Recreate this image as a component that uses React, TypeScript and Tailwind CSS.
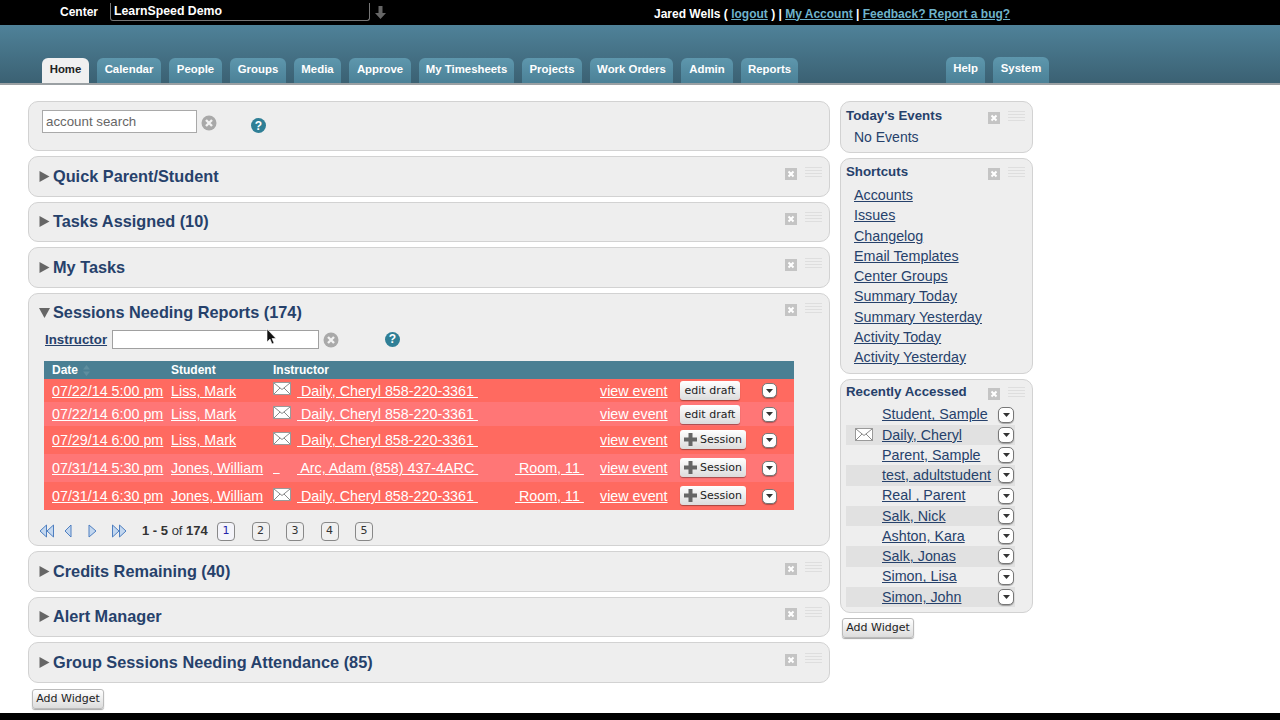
import React from "react";

const F = "font-['Liberation_Sans',Arial,sans-serif]";

function CloseBox() {
  return (
    <span className="flex h-3 w-3 items-center justify-center bg-[#c4c4c4]">
      <svg width="8" height="8" viewBox="0 0 8 8"><path d="M1.5 1.5L6.5 6.5M6.5 1.5L1.5 6.5" stroke="#fff" strokeWidth="2" /></svg>
    </span>
  );
}
function Drag() {
  return (
    <span className="flex w-[17px] flex-col gap-[2px]">
      {[0, 1, 2, 3].map((i) => (
        <span key={i} className="h-px w-full bg-[#dedede]" />
      ))}
    </span>
  );
}
function Controls({ low }: { low?: boolean }) {
  return (
    <div className={`ml-auto flex items-start gap-[8px] pr-[7px] ${low ? "mt-[4px]" : ""}`}>
      <span className="mt-[1px]"><CloseBox /></span>
      <span><Drag /></span>
    </div>
  );
}
function ClearIcon() {
  return (
    <svg width="16" height="16" viewBox="0 0 16 16" className="shrink-0">
      <circle cx="8" cy="8" r="7.5" fill="#a9a9a9" />
      <path d="M5 5L11 11M11 5L5 11" stroke="#f2f2f2" strokeWidth="2.4" />
    </svg>
  );
}
function HelpIcon() {
  return (
    <span className={`flex h-[15px] w-[15px] shrink-0 items-center justify-center rounded-full bg-[#2f7f96] text-[12px] font-bold leading-none text-white ${F}`}>?</span>
  );
}
function Envelope() {
  return (
    <svg width="18" height="13" viewBox="0 0 18 13" className="shrink-0">
      <rect x="0.5" y="0.5" width="17" height="12" fill="#fff" stroke="#9a9a9a" />
      <path d="M1 1L9 7.5L17 1M1 12L7 6M17 12L11 6" fill="none" stroke="#8a8a8a" strokeWidth="1" />
    </svg>
  );
}
function Caret({ open }: { open?: boolean }) {
  return (
    <svg width="11" height="11" viewBox="0 0 11 11" className="shrink-0">
      {open ? <path d="M0 1H11L5.5 11Z" fill="#666" /> : <path d="M0.5 0L10.5 5.5L0.5 11Z" fill="#666" />}
    </svg>
  );
}
function Drop({ size = 15 }: { size?: number }) {
  return (
    <span className="flex shrink-0 items-center justify-center rounded-[5px] border border-[#777] bg-white shadow-[0_1px_1px_rgba(0,0,0,.3)]" style={{ width: size, height: size }}>
      <svg width="7" height="4" viewBox="0 0 7 4"><path d="M0 0H7L3.5 4Z" fill="#333" /></svg>
    </span>
  );
}
function Panel({ title }: { title: string }) {
  return (
    <section className="flex h-[40.5px] items-start rounded-[10px] border border-[#d2d2d2] bg-[#eeeeee] pl-[10px] pt-[9.5px]">
      <span className="mt-[4px]"><Caret /></span>
      <h2 className="ml-[3px] text-[16.3px] font-bold leading-[19px] text-[#26416b]">{title}</h2>
      <Controls />
    </section>
  );
}

const tabs: [string, number][] = [
  ["Calendar", 64], ["People", 53], ["Groups", 56], ["Media", 47], ["Approve", 62],
  ["My Timesheets", 95], ["Projects", 60], ["Work Orders", 83], ["Admin", 52], ["Reports", 57],
];
function Tab({ label, w, h = 25 }: { label: string; w: number; h?: number }) {
  return (
    <span className="flex items-start justify-center rounded-t-[6px] bg-gradient-to-b from-[#5e97ad] to-[#4b8197] pt-[4px] text-[11.4px] font-bold leading-[14px] text-white" style={{ width: w, height: h }}>
      {label}
    </span>
  );
}

type Row = { date: string; student: string; env: boolean; inst: string; room?: string; action: "draft" | "session"; h: string; bg: string; };
const rows: Row[] = [
  { date: "07/22/14 5:00 pm", student: "Liss, Mark", env: true, inst: "Daily, Cheryl 858-220-3361", action: "draft", h: "h-[23px]", bg: "bg-[#ff6a60]" },
  { date: "07/22/14 6:00 pm", student: "Liss, Mark", env: true, inst: "Daily, Cheryl 858-220-3361", action: "draft", h: "h-[24px]", bg: "bg-[#ff7676]" },
  { date: "07/29/14 6:00 pm", student: "Liss, Mark", env: true, inst: "Daily, Cheryl 858-220-3361", action: "session", h: "h-[28px]", bg: "bg-[#ff6a60]" },
  { date: "07/31/14 5:30 pm", student: "Jones, William", env: false, inst: "Arc, Adam (858) 437-4ARC", room: "Room, 11", action: "session", h: "h-[28px]", bg: "bg-[#ff7676]" },
  { date: "07/31/14 6:30 pm", student: "Jones, William", env: true, inst: "Daily, Cheryl 858-220-3361", room: "Room, 11", action: "session", h: "h-[28px]", bg: "bg-[#ff6a60]" },
];

function Btn({ children, cls }: { children: React.ReactNode; cls?: string }) {
  return (
    <span className={`flex h-[19px] items-center justify-center rounded-[3px] bg-gradient-to-b from-[#ffffff] to-[#dcdcdc] font-['DejaVu_Sans',sans-serif] text-[11px] leading-none text-[#222] shadow-[0_1px_1px_rgba(0,0,0,.35)] ${cls ?? ""}`}>
      {children}
    </span>
  );
}
function Plus() {
  return (
    <svg width="13" height="13" viewBox="0 0 13 13" className="mr-[3px]"><path d="M4.5 0H8.5V4.5H13V8.5H8.5V13H4.5V8.5H0V4.5H4.5Z" fill="#666" /></svg>
  );
}
function TableRow({ r }: { r: Row }) {
  return (
    <div className={`flex items-center text-[14.3px] leading-none text-white ${r.h} ${r.bg}`}>
      <a className="ml-[8px] w-[119px] underline">{r.date}</a>
      <a className="w-[102px] underline">{r.student}</a>
      <span className="flex w-[24px] -translate-y-[2px]">{r.env ? <Envelope /> : <span className="mt-[4px] w-[12px] text-[12px] underline">&nbsp;&nbsp;</span>}</span>
      <a className="w-[218px] whitespace-pre underline">{" " + r.inst + " "}</a>
      <span className="w-[85px] whitespace-pre">{r.room ? <a className="underline">{" " + r.room + " "}</a> : null}</span>
      <a className="w-[80px] underline">view event</a>
      {r.action === "draft" ? (
        <Btn cls="w-[60px] mr-[22px]">edit draft</Btn>
      ) : (
        <Btn cls="w-[66px] mr-[16px] -translate-y-[1px]"><Plus />Session</Btn>
      )}
      <Drop />
    </div>
  );
}
function PagerIcon({ d }: { d: string }) {
  return (
    <svg width="16" height="14" viewBox="0 0 16 14" className="shrink-0">
      <path d={d} fill="#c3d7ef" stroke="#4f7fc0" strokeWidth="1" strokeLinejoin="round" />
    </svg>
  );
}
function PageBox({ n, active }: { n: number; active?: boolean }) {
  return (
    <span className={`flex h-[19px] w-[18px] items-center justify-center rounded-[4px] border border-[#888] font-['DejaVu_Sans',sans-serif] text-[11px] ${active ? "bg-[#f4f4fa] text-[#2222aa]" : "bg-[#f0f0f0] text-[#333]"}`}>{n}</span>
  );
}

const shortcuts = ["Accounts", "Issues", "Changelog", "Email Templates", "Center Groups", "Summary Today", "Summary Yesterday", "Activity Today", "Activity Yesterday"];
const recent = ["Student, Sample", "Daily, Cheryl", "Parent, Sample", "test, adultstudent", "Real , Parent", "Salk, Nick", "Ashton, Kara", "Salk, Jonas", "Simon, Lisa", "Simon, John"];

export default function App() {
  return (
    <div className={`flex h-[720px] w-[1280px] flex-col overflow-hidden bg-white ${F}`}>
      <header className="flex h-[25px] shrink-0 items-center bg-black text-white">
        <span className="ml-[60px] w-[50px] -translate-y-[1px] text-[12px] font-bold">Center</span>
        <span className="flex h-[18px] w-[260px] -translate-y-[1px] items-center rounded-b-[3px] border-x border-b border-[#777] pl-[3px] text-[12.3px] font-bold">LearnSpeed Demo</span>
        <svg width="11" height="13" viewBox="0 0 11 13" className="ml-[5px]"><path d="M3.5 0H7.5V7H11L5.5 13L0 7H3.5Z" fill="#666" /></svg>
        <div className="ml-[268px] translate-y-[1px] text-[12px] font-semibold">
          Jared Wells ( <a className="text-[#6fb3cb] underline">logout</a> ) | <a className="text-[#6fb3cb] underline">My Account</a> | <a className="text-[#6fb3cb] underline">Feedback? Report a bug?</a>
        </div>
      </header>
      <nav className="flex h-[60px] shrink-0 items-end border-b-2 border-[#9aa0a3] bg-gradient-to-b from-[#4f8299] to-[#3b6173] pl-[42px]">
        <span className="flex h-[25px] w-[47px] items-start justify-center rounded-t-[6px] bg-[#f0f0f0] pt-[4px] text-[11.4px] font-bold leading-[14px] text-[#222]">Home</span>
        <div className="ml-[8px] flex gap-[8px]">
          {tabs.map(([l, w]) => <Tab key={l} label={l} w={w} />)}
        </div>
        <div className="ml-[148px] flex gap-[8px]">
          <Tab label="Help" w={39} h={26} />
          <Tab label="System" w={56} h={26} />
        </div>
      </nav>

      <main className="flex min-h-0 flex-1 pl-[28px] pt-[16px]">
        <div className="flex w-[802px] flex-col gap-[5px]">
          <section className="flex h-[50px] items-start rounded-[10px] border border-[#d2d2d2] bg-[#eeeeee] pl-[13px] pt-[8px]">
            <span className="flex h-[23px] w-[155px] items-center border border-[#a9a9a9] bg-white pl-[3px] text-[13.3px] text-[#666]">account search</span>
            <span className="ml-[4px] mt-[5px]"><ClearIcon /></span>
            <span className="ml-[34px] mt-[8px]"><HelpIcon /></span>
          </section>
          <Panel title="Quick Parent/Student" />
          <Panel title="Tasks Assigned (10)" />
          <Panel title="My Tasks" />

          <section className="relative flex h-[253.5px] flex-col rounded-[10px] border border-[#d2d2d2] bg-[#eeeeee] pl-[10px] pt-[9px]">
            <div className="flex items-start">
              <span className="mt-[4px]"><Caret open /></span>
              <h2 className="ml-[3px] text-[16.3px] font-bold leading-[19px] text-[#26416b]">Sessions Needing Reports (174)</h2>
              <Controls />
            </div>
            <div className="ml-[6px] mt-[8px] flex items-center">
              <a className="w-[67px] text-[13.3px] font-bold text-[#26416b] underline">Instructor</a>
              <span className="h-[19px] w-[207px] border border-[#a0a0a0] bg-white" />
              <span className="ml-[4px] mt-[2px]"><ClearIcon /></span>
              <span className="ml-[46px]"><HelpIcon /></span>
            </div>
            <div className="ml-[5px] mt-[12px] w-[750px]">
              <div className="flex h-[18px] items-center bg-[#4a7f93] text-[12px] font-bold text-white">
                <span className="ml-[8px] flex w-[119px] items-center">
                  Date
                  <svg width="7" height="11" viewBox="0 0 7 11" className="ml-[5px]"><path d="M3.5 0L7 4.5H0ZM3.5 11L0 6.5H7Z" fill="#5f8e9f" /></svg>
                </span>
                <span className="w-[102px]">Student</span>
                <span>Instructor</span>
              </div>
              {rows.map((r, i) => <TableRow key={i} r={r} />)}
            </div>
            <div className="mt-[11px] flex items-center text-[13px] text-[#333]">
              <PagerIcon d="M7.5 1L1 7L7.5 13ZM14.5 1L8 7L14.5 13Z" />
              <span className="ml-[7px]"><PagerIcon d="M9 1L3 7L9 13Z" /></span>
              <span className="ml-[7px]"><PagerIcon d="M4 1L11 7L4 13Z" /></span>
              <span className="ml-[10px]"><PagerIcon d="M1.5 1L8 7L1.5 13ZM8.5 1L15 7L8.5 13Z" /></span>
              <span className="ml-[15px] w-[75px]"><b>1 - 5</b> of <b>174</b></span>
              <span className="flex gap-[16.5px]">
                <PageBox n={1} active /><PageBox n={2} /><PageBox n={3} /><PageBox n={4} /><PageBox n={5} />
              </span>
            </div>
            <svg width="12" height="18" viewBox="0 0 12 18" className="absolute left-[237px] top-[34px]">
              <path d="M1 1V14L4 11L6 16L8 15L6 10.5H10Z" fill="#111" stroke="#fff" strokeWidth="0.6" />
            </svg>
          </section>

          <Panel title="Credits Remaining (40)" />
          <Panel title="Alert Manager" />
          <Panel title="Group Sessions Needing Attendance (85)" />
          <Btn cls="ml-[4px] mt-[1px] h-[20px] w-[72px] border border-[#bbb]">Add Widget</Btn>
        </div>

        <aside className="ml-[10px] flex w-[193px] flex-col gap-[5px]">
          <section className="h-[52px] rounded-[10px] border border-[#d2d2d2] bg-[#eeeeee] pl-[5px] pt-[5px]">
            <div className="flex items-start">
              <h3 className="text-[13.3px] font-bold leading-[17px] text-[#26416b]">Today's Events</h3>
              <Controls low />
            </div>
            <p className="ml-[8px] mt-[5px] text-[14px] leading-[17px] text-[#26416b]">No Events</p>
          </section>
          <section className="h-[215.5px] rounded-[10px] border border-[#d2d2d2] bg-[#eeeeee] pl-[5px] pt-[4px]">
            <div className="flex items-start">
              <h3 className="text-[13.3px] font-bold leading-[17px] text-[#26416b]">Shortcuts</h3>
              <Controls low />
            </div>
            <ul className="ml-[8px] mt-[5px]">
              {shortcuts.map((s) => (
                <li key={s} className="h-[20.25px] text-[14.3px] leading-[20px] text-[#26416b] underline">{s}</li>
              ))}
            </ul>
          </section>
          <section className="h-[234px] rounded-[10px] border border-[#d2d2d2] bg-[#eeeeee] pl-[5px] pt-[3px]">
            <div className="flex items-start">
              <h3 className="text-[13.3px] font-bold leading-[17px] text-[#26416b]">Recently Accessed</h3>
              <Controls low />
            </div>
            <ul className="mt-[5px] w-[169px]">
              {recent.map((s, i) => (
                <li key={s} className={`flex h-[20.25px] items-center ${i % 2 ? "bg-[#e1e1e1]" : ""}`}>
                  <span className="ml-[9px] w-[27px]">{s === "Daily, Cheryl" ? <Envelope /> : null}</span>
                  <a className="text-[14.3px] leading-none text-[#26416b] underline">{s}</a>
                  <span className="ml-auto mr-[1px]"><Drop size={16} /></span>
                </li>
              ))}
            </ul>
          </section>
          <Btn cls="ml-[2px] h-[20px] w-[72px] border border-[#bbb]">Add Widget</Btn>
        </aside>
      </main>
      <footer className="h-[7px] shrink-0 bg-black" />
    </div>
  );
}
